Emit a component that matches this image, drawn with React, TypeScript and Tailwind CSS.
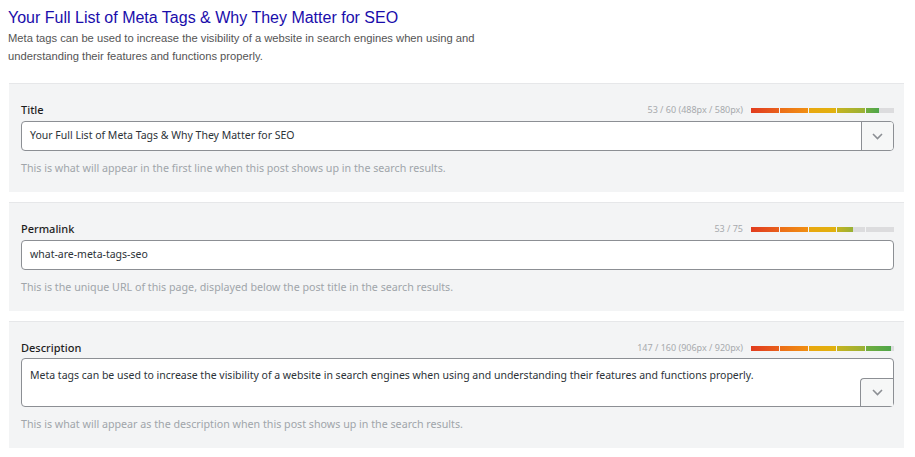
import React from 'react';

// segment colour stops, left to right
const SEGMENTS = [
  ['#e23c1e', '#e8601c'],
  ['#ec6e19', '#f08f12'],
  ['#e9a70f', '#e0b20f'],
  ['#c6b320', '#98b136'],
  ['#72ad3e', '#4ea64a'],
];

function ScoreBar({ ratio }: { ratio: number }) {
  return (
    <div className="flex w-[143px] gap-px">
      {SEGMENTS.map(([from, to], i) => {
        const fill = Math.max(0, Math.min(1, ratio * 5 - i));
        return (
          <div key={i} className="h-[5px] flex-1 bg-[#dcdcde]">
            <div
              className="h-full"
              style={{ width: `${fill * 100}%`, background: `linear-gradient(to right, ${from}, ${to})` }}
            />
          </div>
        );
      })}
    </div>
  );
}

function Chevron() {
  return (
    <svg width="11" height="7" viewBox="0 0 11 7" fill="none">
      <path d="M1 1l4.5 4.5L10 1" stroke="#8c8f94" strokeWidth="1.6" />
    </svg>
  );
}

interface FieldProps {
  label: string;
  counter: string;
  ratio: number;
  value: string;
  help: string;
  kind: 'select' | 'plain' | 'area';
}

function Field({ label, counter, ratio, value, help, kind }: FieldProps) {
  return (
    <div className="border-t border-[#e6e7e9] bg-[#f3f4f5] pl-3 pr-[10px] pt-[18px] pb-[17px]">
      <div className="flex h-4 items-center justify-between">
        <span className="text-[11px] font-medium text-[#1e1e1e]">{label}</span>
        <div className="flex items-center gap-2">
          <span className="text-[9px] text-[#a7aaad]">{counter}</span>
          <ScoreBar ratio={ratio} />
        </div>
      </div>
      {kind === 'area' ? (
        <div className="relative mt-[2px] h-[49px] rounded border border-[#8c8f94] bg-white pl-2 pt-[9px] text-[10.5px] text-[#2c3338]">
          {value}
          <div className="absolute right-0 bottom-0 flex h-[28px] w-[33px] items-center justify-center rounded-tl border-t border-l border-[#8c8f94] bg-[#f6f7f7]">
            <Chevron />
          </div>
        </div>
      ) : (
        <div className="mt-[3px] flex h-[30px] items-stretch overflow-hidden rounded border border-[#8c8f94] bg-white">
          <div className="flex flex-1 items-center pl-2 text-[10.5px] text-[#2c3338]">{value}</div>
          {kind === 'select' && (
            <div className="flex w-[32px] items-center justify-center border-l border-[#8c8f94] bg-[#f6f7f7]">
              <Chevron />
            </div>
          )}
        </div>
      )}
      <p className="mt-[10px] h-[14px] text-[10.7px] leading-[14px] text-[#a0a5aa]">{help}</p>
    </div>
  );
}

export default function App() {
  return (
    <div className="min-h-screen bg-white pl-2 pr-[11px] pt-[7px]" style={{ fontFamily: '"Noto Sans", "Open Sans", sans-serif' }}>
      <h1 className="text-[16px] leading-[22px] text-[#1a0dab]" style={{ fontFamily: '"Liberation Sans", Arial, sans-serif' }}>
        Your Full List of Meta Tags &amp; Why They Matter for SEO
      </h1>
      <p className="w-[480px] text-[11.2px] leading-[18px] text-[#545454]" style={{ fontFamily: '"Liberation Sans", Arial, sans-serif' }}>
        Meta tags can be used to increase the visibility of a website in search engines when using and understanding their features and functions properly.
      </p>

      <div className="mt-[18px] ml-px flex flex-col gap-[10px]">
        <Field
          label="Title"
          counter="53 / 60 (488px / 580px)"
          ratio={0.89}
          value="Your Full List of Meta Tags & Why They Matter for SEO"
          help="This is what will appear in the first line when this post shows up in the search results."
          kind="select"
        />
        <Field
          label="Permalink"
          counter="53 / 75"
          ratio={0.71}
          value="what-are-meta-tags-seo"
          help="This is the unique URL of this page, displayed below the post title in the search results."
          kind="plain"
        />
        <Field
          label="Description"
          counter="147 / 160 (906px / 920px)"
          ratio={0.98}
          value="Meta tags can be used to increase the visibility of a website in search engines when using and understanding their features and functions properly."
          help="This is what will appear as the description when this post shows up in the search results."
          kind="area"
        />
      </div>
    </div>
  );
}
